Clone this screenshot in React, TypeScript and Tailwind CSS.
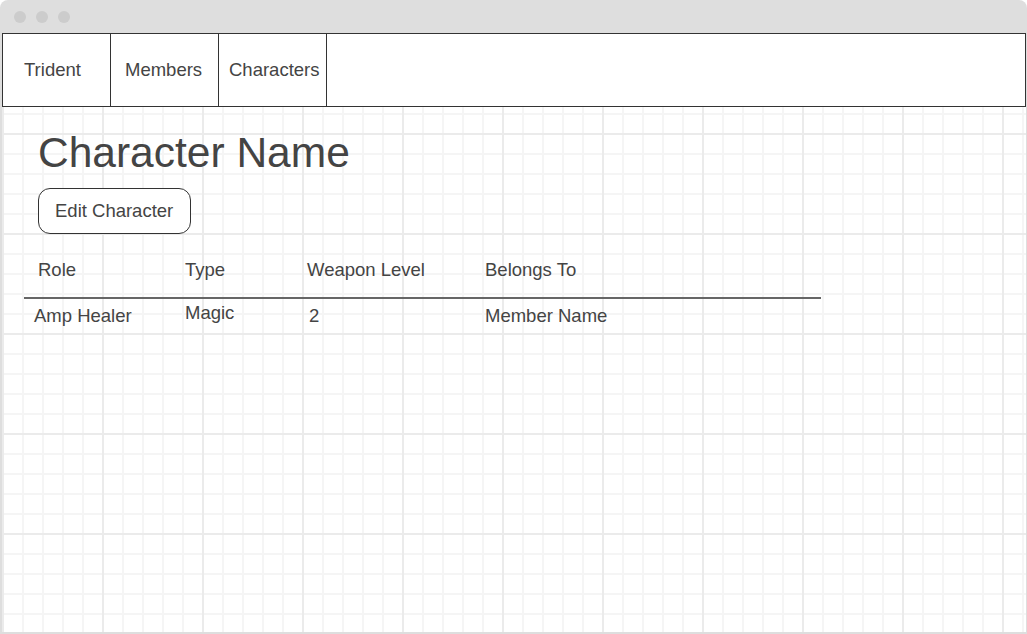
const font = { fontFamily: '"Liberation Sans", Arial, sans-serif' };

const nav = [
  { label: 'Trident', pad: 'pl-[21px]' },
  { label: 'Members', pad: 'pl-[14px]' },
  { label: 'Characters', pad: 'pl-[10px]' },
];

const cols = 'grid grid-cols-[151px_122px_178px_346px]';

export default function App() {
  return (
    <div
      style={font}
      className="w-[1027px] h-[634px] bg-[#dedede] rounded-t-[8px] flex flex-col px-[2px] pb-[2px] pr-[1px] text-[#444]"
    >
      {/* window title bar */}
      <div className="h-[33px] shrink-0 flex items-center gap-[10px] pl-[14px] -mx-[2px]">
        <span className="w-[12px] h-[12px] rounded-full bg-[#cccccc]" />
        <span className="w-[12px] h-[12px] rounded-full bg-[#cccccc]" />
        <span className="w-[12px] h-[12px] rounded-full bg-[#cccccc]" />
      </div>

      <div className="flex-1 bg-white bg-[linear-gradient(to_right,#ebebeb_2px,transparent_2px),linear-gradient(to_bottom,#ebebeb_2px,transparent_2px),linear-gradient(to_right,#f5f5f5_2px,transparent_2px),linear-gradient(to_bottom,#f5f5f5_2px,transparent_2px)] [background-size:100px_100px,100px_100px,20px_20px,20px_20px]">
        {/* nav */}
        <div className="h-[74px] border border-[#333] bg-white flex text-[18.5px]">
          {nav.map((n) => (
            <div
              key={n.label}
              className={`w-[108px] border-r border-[#333] flex items-center ${n.pad}`}
            >
              {n.label}
            </div>
          ))}
        </div>

        <div className="pl-[36px]">
          <h1 className="mt-[25px] text-[42.5px] leading-[42px]">Character Name</h1>
          <button className="mt-[14px] w-[153px] h-[46px] border border-[#333] rounded-[12px] bg-white text-[18.5px] text-left pl-[16px] text-[#444]">
            Edit Character
          </button>
        </div>

        <div className="ml-[22px] w-[797px] text-[18.5px] leading-[24px]">
          <div className={`${cols} mt-[24px] pb-[15px] border-b-2 border-[#666]`}>
            <div className="pl-[14px]">Role</div>
            <div className="pl-[10px]">Type</div>
            <div className="pl-[10px]">Weapon Level</div>
            <div className="pl-[10px]">Belongs To</div>
          </div>
          <div className={cols}>
            <div className="pl-[10px] pt-[5px]">Amp Healer</div>
            <div className="pl-[10px] pt-[2px]">Magic</div>
            <div className="pl-[12px] pt-[5px]">2</div>
            <div className="pl-[10px] pt-[5px]">Member Name</div>
          </div>
        </div>
      </div>
    </div>
  );
}
